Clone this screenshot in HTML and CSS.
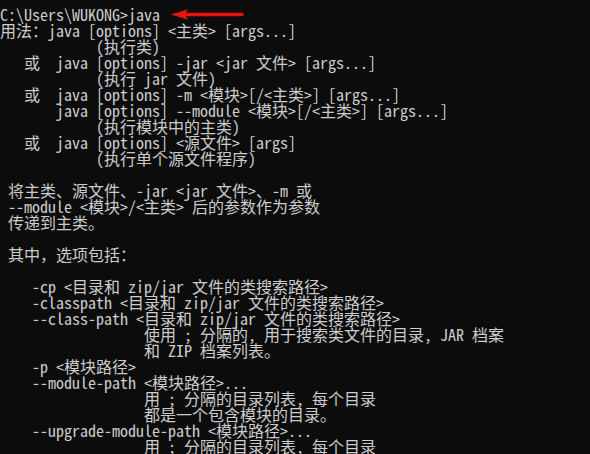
FILE: index.html
```html
<!DOCTYPE html>
<html>
<head>
  <title>命令提示符 - java</title>
  <link rel="stylesheet" href="styles.css">
</head>

<body>
  <div class="console">
<pre class="output">C:\Users\WUKONG&gt;java
用法：java [options] &lt;主类&gt; [args...]
            (执行类)
   或  java [options] -jar &lt;jar 文件&gt; [args...]
            (执行 jar 文件)
   或  java [options] -m &lt;模块&gt;[/&lt;主类&gt;] [args...]
       java [options] --module &lt;模块&gt;[/&lt;主类&gt;] [args...]
            (执行模块中的主类)
   或  java [options] &lt;源文件&gt; [args]
            (执行单个源文件程序)

 将主类、源文件、-jar &lt;jar 文件&gt;、-m 或
 --module &lt;模块&gt;/&lt;主类&gt; 后的参数作为参数
 传递到主类。

 其中，选项包括：

    -cp &lt;目录和 zip/jar 文件的类搜索路径&gt;
    -classpath &lt;目录和 zip/jar 文件的类搜索路径&gt;
    --class-path &lt;目录和 zip/jar 文件的类搜索路径&gt;
                  使用 ; 分隔的, 用于搜索类文件的目录, JAR 档案
                  和 ZIP 档案列表。
    -p &lt;模块路径&gt;
    --module-path &lt;模块路径&gt;...
                  用 ; 分隔的目录列表, 每个目录
                  都是一个包含模块的目录。
    --upgrade-module-path &lt;模块路径&gt;...
                  用 ; 分隔的目录列表, 每个目录</pre>

    <!-- red arrow pointing at the typed command -->
    <svg class="arrow" width="80" height="16" viewBox="0 0 80 16">
      <line x1="16" y1="8.5" x2="74" y2="8.5" stroke="#e8140f" stroke-width="3.4" stroke-linecap="round"/>
      <polygon points="3,8.5 20,3.2 17,8.5 20,13.8" fill="#e8140f"/>
    </svg>
  </div>
</body>
</html>
```

FILE: styles.css
```css
html, body {
  margin: 0;
  padding: 0;
  background: #0c0c0c;
}
.console {
  position: relative;
  width: 590px;
  height: 454px;
  overflow: hidden;
  background: #0c0c0c;
}
.output {
  margin: 0;
  padding: 6px 0 0 0;
  color: #cccccc;
  font-family: "Noto Sans Mono CJK SC", "Noto Sans CJK SC", monospace;
  font-size: 16px;
  line-height: 16px;
  white-space: pre;
}
.arrow {
  position: absolute;
  left: 168px;
  top: 6px;
}
```
